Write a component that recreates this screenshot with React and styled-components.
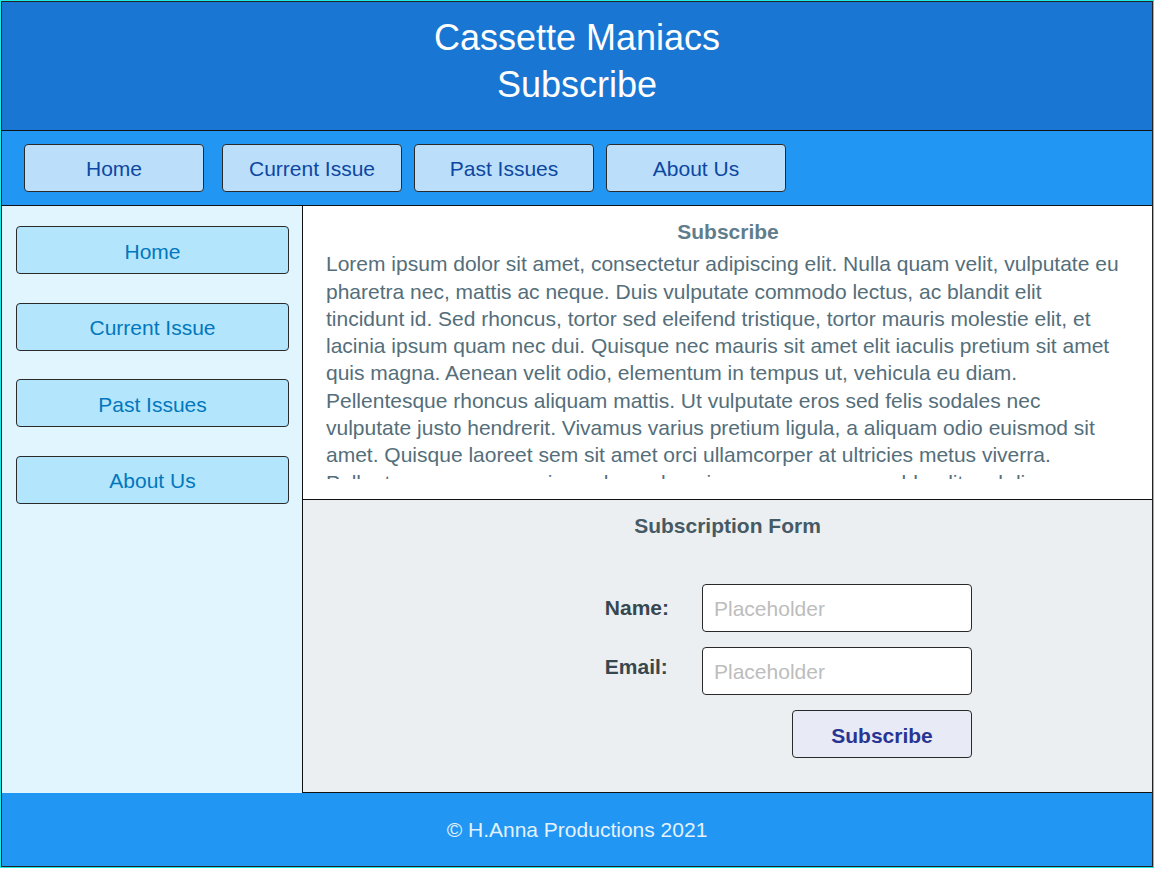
import React from "react";
import styled, { createGlobalStyle } from "styled-components";

const Global = createGlobalStyle`
  html, body { margin: 0; padding: 0; background: #ffffff; }
  body { font-family: "Liberation Sans", Arial, sans-serif; }
  * { box-sizing: border-box; }
`;

const Page = styled.div`
  width: 1154px;
  height: 868px;
  border: 1px solid #1de9e6;
  display: flex;
`;

const Frame = styled.div`
  flex: 1;
  border: 1px solid #222;
  display: grid;
  grid-template-columns: 301px 1fr;
  grid-template-rows: 129px 75px 294px 1fr 73px;
  grid-template-areas:
    "header header"
    "nav nav"
    "side main"
    "side form"
    "footer footer";
  overflow: hidden;
`;

const Header = styled.header`
  grid-area: header;
  background: #1976d2;
  border-bottom: 1px solid #111;
  display: flex;
  flex-direction: column;
  align-items: center;
  padding-top: 12px;
  color: #ffffff;
  font-size: 36px;
  line-height: 47px;
`;

const TopNav = styled.nav`
  grid-area: nav;
  background: #2196f3;
  border-bottom: 1px solid #111;
  display: flex;
  align-items: center;
  gap: 12px;
  padding: 0 0 0 22px;
`;

const TopButton = styled.button`
  width: 180px;
  height: 48px;
  background: #bbdefb;
  color: #0d47a1;
  border: 1px solid #2a2a2a;
  border-radius: 4px;
  font-family: "Liberation Sans", Arial, sans-serif;
  font-size: 21px;
  padding: 2px 0 0;
  &:first-child { margin-right: 6px; }
`;

const Sidebar = styled.aside`
  grid-area: side;
  background: #e1f5fe;
  border-right: 1px solid #111;
  display: flex;
  flex-direction: column;
  gap: 28.6px;
  padding: 20px 13px 0 14px;
`;

const SideButton = styled.button`
  height: 48px;
  width: 100%;
  background: #b3e5fc;
  color: #0277bd;
  border: 1px solid #2a2a2a;
  border-radius: 4px;
  font-family: "Liberation Sans", Arial, sans-serif;
  font-size: 21px;
  padding: 3px 0 0;
`;

const Main = styled.section`
  grid-area: main;
  background: #ffffff;
  border-bottom: 1px solid #111;
  display: flex;
  flex-direction: column;
  padding: 12px 30px 20px 23px;
  min-height: 0;
`;

const SectionTitle = styled.h2`
  margin: 0 0 ${(p) => p.$gap || 0}px;
  padding-left: ${(p) => p.$shift || 0}px;
  text-align: center;
  font-size: 21px;
  line-height: 27.3px;
  font-weight: bold;
  color: ${(p) => p.$color};
`;

const Body = styled.p`
  flex: 1;
  margin: 0;
  overflow: hidden;
  font-size: 21px;
  line-height: 27.3px;
  color: #546e7a;
`;

const FormArea = styled.section`
  grid-area: form;
  background: #eceff1;
  border-bottom: 1px solid #111;
  padding: 12px 0 0 0;
  display: flex;
  flex-direction: column;
`;

const FormGrid = styled.form`
  margin-top: 45px;
  display: grid;
  grid-template-columns: auto 270px;
  column-gap: 33px;
  row-gap: 15px;
  justify-content: end;
  align-items: center;
  padding-right: 180px;
`;

const Label = styled.label`
  font-size: 21px;
  font-weight: bold;
  color: #37474f;
  margin-top: ${(p) => p.$lift || 0}px;
`;

const Input = styled.input`
  height: 48px;
  width: 270px;
  border: 1px solid #2a2a2a;
  border-radius: 4px;
  background: #ffffff;
  padding: 2px 11px 0;
  font-family: "Liberation Sans", Arial, sans-serif;
  font-size: 21px;
  color: #333;
  &::placeholder { color: #bdbdbd; }
`;

const SubmitButton = styled.button`
  grid-column: 2;
  justify-self: end;
  width: 180px;
  height: 48px;
  background: #e8eaf6;
  color: #283593;
  border: 1px solid #2a2a2a;
  border-radius: 4px;
  font-family: "Liberation Sans", Arial, sans-serif;
  font-size: 21px;
  font-weight: bold;
  padding: 3px 0 0;
`;

const Footer = styled.footer`
  grid-area: footer;
  background: #2196f3;
  color: #e3f2fd;
  display: flex;
  align-items: center;
  justify-content: center;
  font-size: 21px;
`;

const navItems = ["Home", "Current Issue", "Past Issues", "About Us"];

const lorem =
  "Lorem ipsum dolor sit amet, consectetur adipiscing elit. Nulla quam velit, vulputate eu pharetra nec, mattis ac neque. Duis vulputate commodo lectus, ac blandit elit tincidunt id. Sed rhoncus, tortor sed eleifend tristique, tortor mauris molestie elit, et lacinia ipsum quam nec dui. Quisque nec mauris sit amet elit iaculis pretium sit amet quis magna. Aenean velit odio, elementum in tempus ut, vehicula eu diam. Pellentesque rhoncus aliquam mattis. Ut vulputate eros sed felis sodales nec vulputate justo hendrerit. Vivamus varius pretium ligula, a aliquam odio euismod sit amet. Quisque laoreet sem sit amet orci ullamcorper at ultricies metus viverra. Pellentesque arcu mauris, malesuada quis ornare accumsan, blandit sed diam.";

export default function App() {
  return (
    <>
      <Global />
      <Page>
        <Frame>
          <Header>
            <span>Cassette Maniacs</span>
            <span>Subscribe</span>
          </Header>
          <TopNav>
            {navItems.map((n) => (
              <TopButton key={n}>{n}</TopButton>
            ))}
          </TopNav>
          <Sidebar>
            {navItems.map((n) => (
              <SideButton key={n}>{n}</SideButton>
            ))}
          </Sidebar>
          <Main>
            <SectionTitle $color="#607d8b" $gap={5} $shift={8}>Subscribe</SectionTitle>
            <Body>{lorem}</Body>
          </Main>
          <FormArea>
            <SectionTitle $color="#455a64">Subscription Form</SectionTitle>
            <FormGrid onSubmit={(e) => e.preventDefault()}>
              <Label htmlFor="name">Name:</Label>
              <Input id="name" placeholder="Placeholder" />
              <Label htmlFor="email" $lift={-8}>Email:</Label>
              <Input id="email" placeholder="Placeholder" />
              <SubmitButton type="submit">Subscribe</SubmitButton>
            </FormGrid>
          </FormArea>
          <Footer>© H.Anna Productions 2021</Footer>
        </Frame>
      </Page>
    </>
  );
}
